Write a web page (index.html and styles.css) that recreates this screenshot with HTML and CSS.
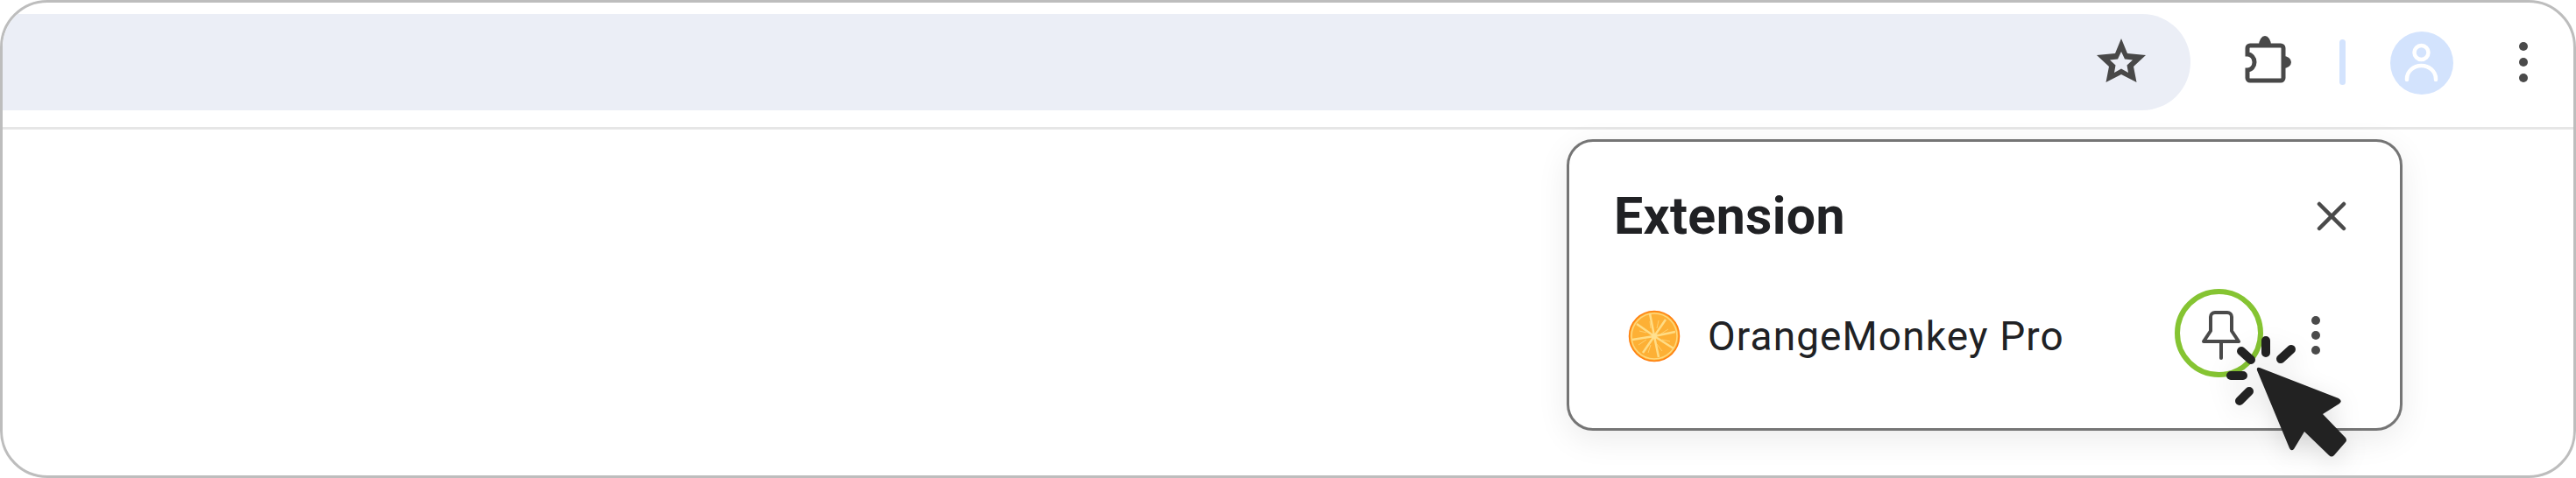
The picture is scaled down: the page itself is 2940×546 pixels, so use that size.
FILE: index.html
```html
<!DOCTYPE html>
<html lang="en">
<head>
    <meta charset="UTF-8">
    <title>Pin extension</title>
    <link rel="stylesheet" href="styles.css">
</head>
<body>
    <div class="browser-window">
        <div class="toolbar">
            <div class="address-bar">
                <svg class="star-icon" viewBox="0 0 60 60">
                    <path fill-rule="evenodd" d="M30 4 L37 21 L58 23 L44 36 L47.5 54 L30 45 L12.5 54 L16 36 L2 23 L23 21 Z M30 19 L26 27.5 L17 28.5 L23.5 34.5 L22 43 L30 38.5 L38 43 L36.5 34.5 L43 28.5 L34 27.5 Z" />
                </svg>
            </div>
            <svg class="puzzle-icon" viewBox="0 0 60 56">
                <path class="puzzle-bump" d="M20 12 A7 11 0 0 1 34 12 Z M48 24 A9 7 0 0 1 48 38 Z" />
                <path class="puzzle-body" d="M10 12 H45 A3 3 0 0 1 48 15 V49 A3 3 0 0 1 45 52 H10 A3 3 0 0 1 7 49 V40 A8 9 0 0 0 7 22 V15 A3 3 0 0 1 10 12 Z" />
            </svg>
            <div class="toolbar-divider"></div>
            <div class="avatar">
                <svg class="avatar-icon" viewBox="0 0 72 72">
                    <circle cx="35.5" cy="24" r="8" />
                    <path d="M19 55 V54 A16.5 15 0 0 1 52 54 V55" />
                </svg>
            </div>
            <div class="menu-dots toolbar-menu">
                <span></span><span></span><span></span>
            </div>
        </div>

        <div class="popup">
            <div class="popup-header">
                <div class="popup-title">Extension</div>
                <svg class="close-icon" viewBox="0 0 36 36">
                    <path d="M4 4 L32 32 M32 4 L4 32" />
                </svg>
            </div>
            <div class="extension-row">
                <svg class="orange-icon" viewBox="0 0 60 60">
                    <circle class="orange-flesh" cx="30" cy="30" r="28.5" />
                    <circle class="orange-pith" cx="30" cy="30" r="26" />
                    <path class="orange-spokes" d="M30 30 L25 4 M30 30 L43 11 M30 30 L54 25 M30 30 L52 44 M30 30 L35 54 M30 30 L17 49 M30 30 L5 34 M30 30 L10 16" />
                    <path class="orange-flecks" d="M33 21 L35 12 M38 27 L46 22 M39 34 L48 36 M33 39 L39 47 M26 40 L23 49 M21 34 L12 40 M21 26 L13 24 M26 21 L25 13" />
                    <circle class="orange-core" cx="30" cy="30" r="3" />
                </svg>
                <div class="extension-name">OrangeMonkey Pro</div>
                <div class="pin-ring">
                    <svg class="pin-icon" viewBox="0 0 48 60">
                        <path d="M4 36 L12 24 V8 A5 5 0 0 1 17 3 H31 A5 5 0 0 1 36 8 V24 L44 36 Z M24 36 V55" />
                    </svg>
                </div>
                <div class="menu-dots row-menu">
                    <span></span><span></span><span></span>
                </div>
            </div>
        </div>

        <!-- Click marks and arrow sit on top of the popup -->
        <svg class="click-cursor" viewBox="2540 380 160 160">
            <path class="click-marks" d="M2558 401 L2569 411 M2586 389 V403 M2603 410 L2615 399 M2546 429 H2560 M2556 458 L2567 447" />
            <path class="cursor-arrow" d="M2579 420 L2669 455 Q2674 458 2670 461 L2651 473 L2677 500 Q2679 503 2677 505 L2664 520 Q2661 523 2658 520 L2630 493 L2618 513 Q2615 516 2613 512 L2576 423 Q2575 419 2579 420 Z" />
        </svg>
    </div>
</body>
</html>
```

FILE: styles.css
```css
body {
    margin: 0;
    background: #fff;
    font-family: 'Roboto', sans-serif;
    color: #202124;
}

.browser-window {
    position: relative;
    box-sizing: border-box;
    width: 2940px;
    height: 546px;
    border: 3px solid #bdbdbd;
    border-radius: 54px;
    overflow: hidden;
    background: #fff;
}

.toolbar {
    display: flex;
    align-items: center;
    height: 110px;
    padding: 13px 0 19px;
    border-bottom: 3px solid #e6e6e6;
}

.address-bar {
    display: flex;
    align-items: center;
    justify-content: flex-end;
    box-sizing: border-box;
    flex: none;
    width: 2497px;
    height: 110px;
    padding-right: 49px;
    background: #ebeef6;
    border-radius: 0 55px 55px 0;
}

.star-icon {
    width: 60px;
    height: 60px;
    margin-top: -2px;
    fill: #484848;
}

.puzzle-icon {
    flex: none;
    width: 60px;
    height: 56px;
    margin-left: 58px;
    margin-top: -6px;
}

.puzzle-bump {
    fill: #484848;
}

.puzzle-body {
    fill: none;
    stroke: #484848;
    stroke-width: 5;
}

.toolbar-divider {
    flex: none;
    width: 7px;
    height: 52px;
    margin-left: 52px;
    background: #d3e3fd;
    border-radius: 4px;
}

.avatar {
    flex: none;
    width: 72px;
    height: 72px;
    margin-left: 51px;
    margin-top: 2px;
    background: #d3e3fd;
    border-radius: 50%;
}

.avatar-icon {
    display: block;
    width: 72px;
    height: 72px;
}

.avatar-icon circle,
.avatar-icon path {
    fill: none;
    stroke: #fff;
    stroke-width: 4.5;
    stroke-linecap: round;
}

.menu-dots {
    display: flex;
    flex-direction: column;
    flex: none;
    gap: 8px;
}

.menu-dots span {
    width: 10px;
    height: 10px;
    background: #4a4a4a;
    border-radius: 50%;
}

.toolbar-menu {
    margin-left: 75px;
}

/* Extensions popup */
.popup {
    position: absolute;
    left: 1785px;
    top: 156px;
    box-sizing: border-box;
    width: 954px;
    height: 333px;
    padding: 0 51px;
    background: #fff;
    border: 3px solid #757575;
    border-radius: 30px;
    box-shadow: 0 10px 36px rgba(0, 0, 0, 0.08);
}

.popup-header {
    display: flex;
    align-items: center;
    justify-content: space-between;
    height: 168px;
    padding-right: 9px;
}

.popup-title {
    font-size: 59px;
    font-weight: 700;
    letter-spacing: 0.4px;
    line-height: 1;
}

.close-icon {
    width: 36px;
    height: 36px;
    margin-top: 2px;
}

.close-icon path {
    fill: none;
    stroke: #4a4a4a;
    stroke-width: 4.5;
    stroke-linecap: round;
}

.extension-row {
    display: flex;
    align-items: center;
    height: 101px;
    padding: 0 40px 0 16px;
}

.orange-icon {
    flex: none;
    width: 60px;
    height: 60px;
    margin-top: 7px;
}

.orange-flesh {
    fill: #fdb035;
    stroke: #ff7f0f;
    stroke-width: 1.5;
}

.orange-pith {
    fill: none;
    stroke: #ffd77a;
    stroke-width: 1.5;
}

.orange-spokes {
    stroke: #ffdc85;
    stroke-width: 2.5;
}

.orange-flecks {
    stroke: #ffd77a;
    stroke-width: 0.8;
}

.orange-core {
    fill: #ffe08f;
}

.extension-name {
    flex: 1;
    margin-left: 31px;
    margin-top: 6px;
    font-size: 46px;
    letter-spacing: 1.1px;
    line-height: 1;
}

.pin-ring {
    display: flex;
    align-items: center;
    justify-content: center;
    box-sizing: border-box;
    flex: none;
    width: 101px;
    height: 101px;
    border: 6px solid #85c432;
    border-radius: 50%;
}

.pin-icon {
    width: 48px;
    height: 60px;
    margin-left: 5px;
    margin-top: 7px;
}

.pin-icon path {
    fill: none;
    stroke: #4a4a4a;
    stroke-width: 4;
    stroke-linecap: round;
    stroke-linejoin: round;
}

.row-menu {
    gap: 7px;
    margin-left: 55px;
    margin-top: 4px;
}

/* Cursor overlay */
.click-cursor {
    position: absolute;
    left: 2537px;
    top: 377px;
    width: 160px;
    height: 160px;
    filter: drop-shadow(0 8px 14px rgba(0, 0, 0, 0.12));
}

.click-marks {
    fill: none;
    stroke: #222;
    stroke-width: 10;
    stroke-linecap: round;
}

.cursor-arrow {
    fill: #222;
}
```
